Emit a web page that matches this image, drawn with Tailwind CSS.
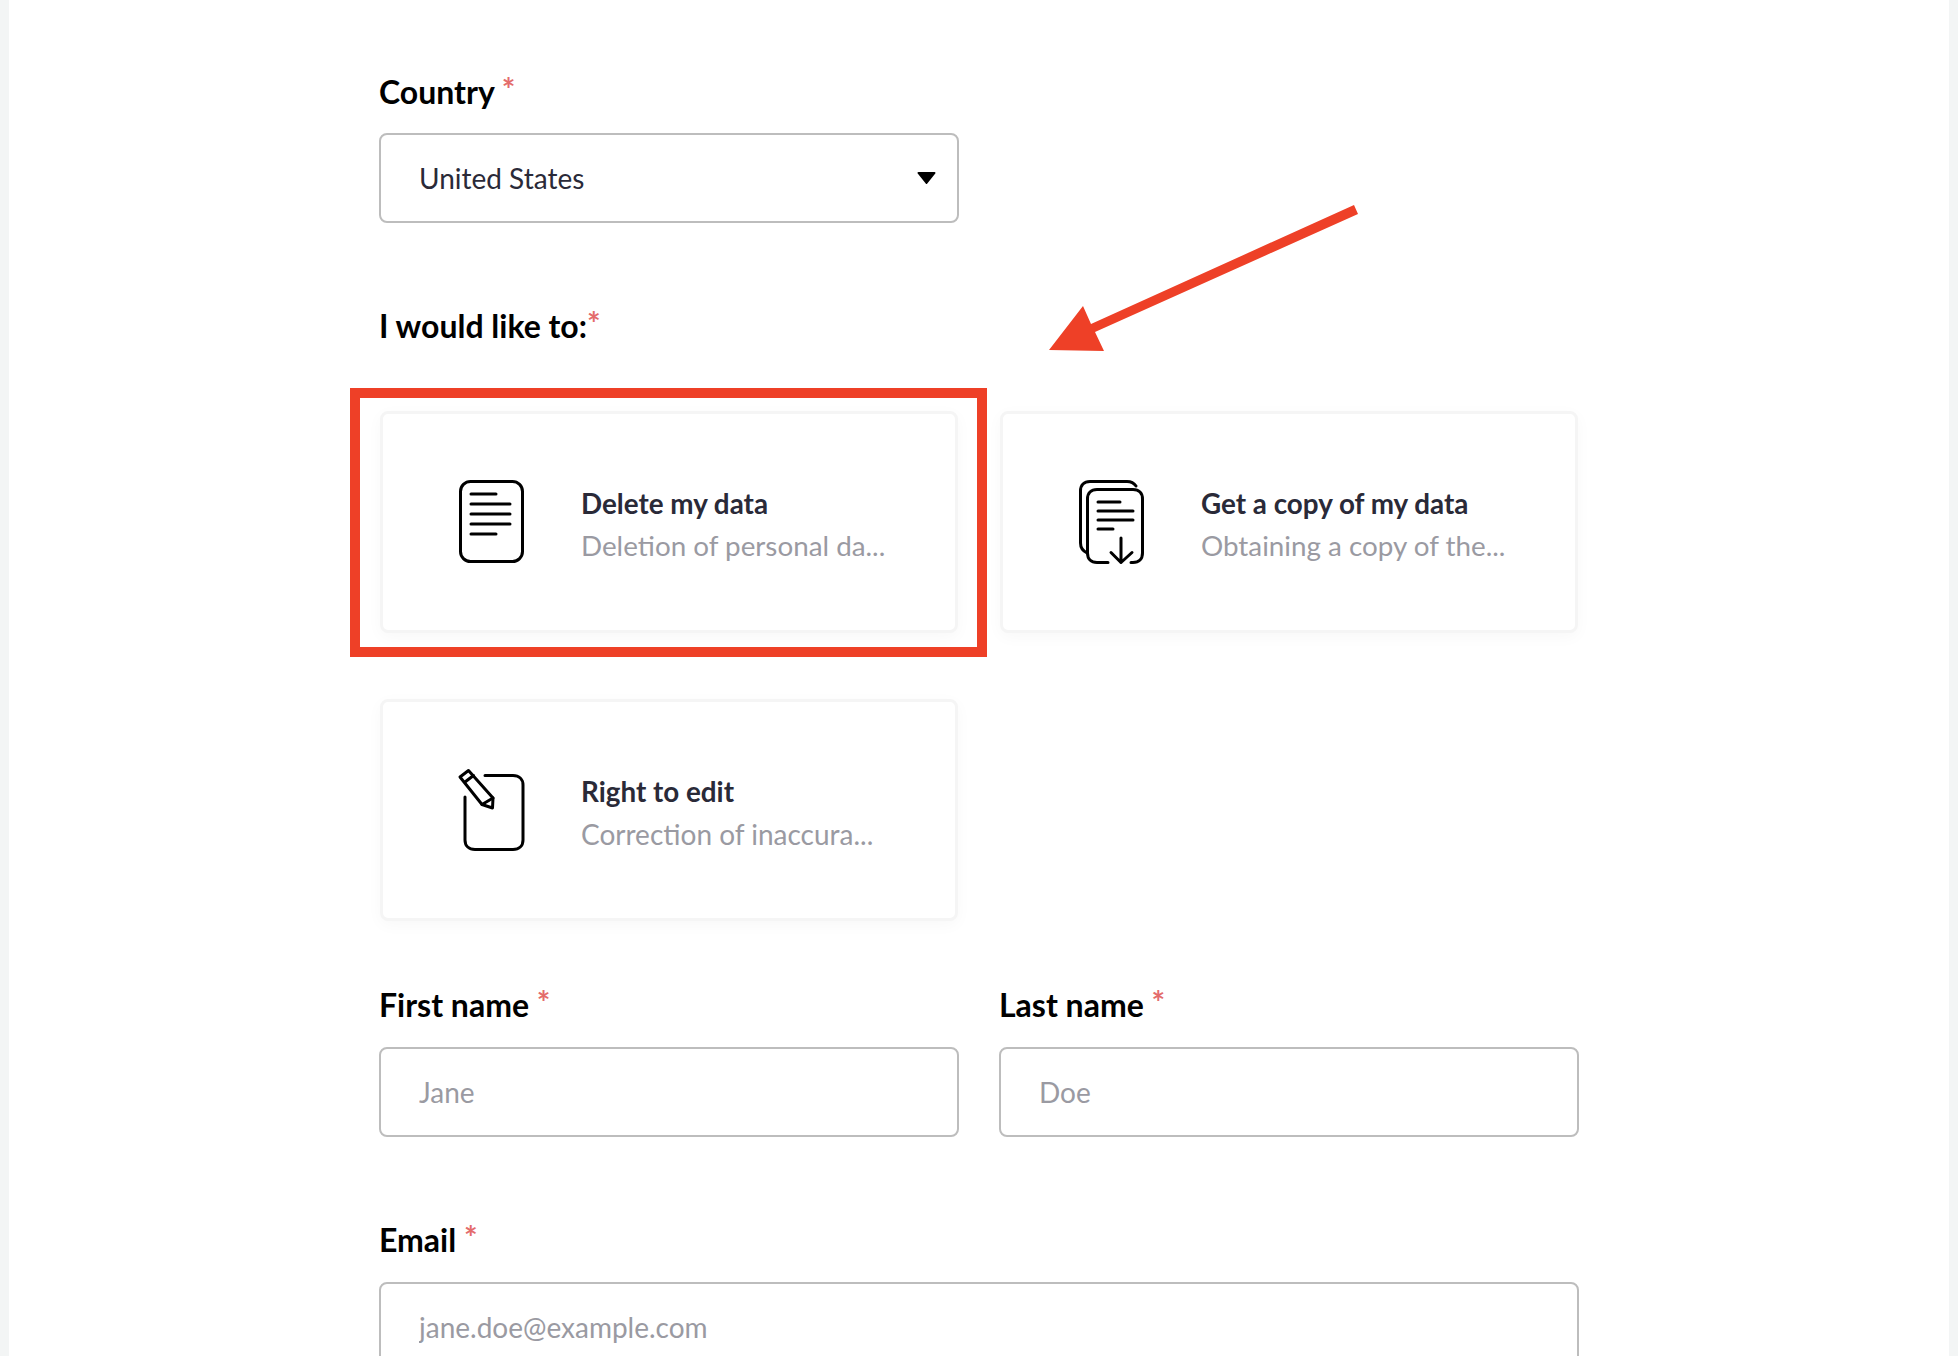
<!DOCTYPE html>
<html lang="en">
<head>
    <meta charset="UTF-8">
    <title>Data request form</title>
    <script src="https://cdn.jsdelivr.net/npm/@tailwindcss/browser@4"></script>
</head>
<body class="bg-white h-screen overflow-hidden font-['Lato',sans-serif]">
    <div class="relative h-full border-l-[9px] border-r-[9px] border-[#f3f5f5] bg-white pt-[71px] pl-[370px]">
        <!-- Annotations -->
        <div class="absolute left-[341px] top-[388px] w-[637px] h-[269px] border-[10px] border-[#ee4027]"></div>
        <svg class="absolute left-[1020px] top-[195px]" width="340" height="165" viewBox="0 0 340 165" fill="none">
            <path d="M325 10 L329 19 L66 137 L75 156 L20 155 L54 111 L62 129 Z" fill="#ee4027"/>
        </svg>

        <form class="w-[1200px]">
            <!-- Country -->
            <label class="block h-10 leading-[41px] mb-[22px] text-[32px] font-bold text-black">Country <span class="text-[#e46c6c] font-bold align-[2px] text-[32px] leading-none">*</span></label>
            <div class="relative w-[580px] mb-[85px]">
                <select class="block w-full h-[90px] appearance-none bg-white border-2 border-[#bdbdbd] rounded-lg pl-[38px] text-[28px] text-[#2a2a38]">
                    <option>United States</option>
                </select>
                <svg class="absolute right-[23px] top-[39px]" width="19" height="12" viewBox="0 0 19 12"><path d="M1.5 1 H17.500 L9.500 11 Z" fill="#000" stroke="#000" stroke-width="2" stroke-linejoin="round"/></svg>
            </div>

            <!-- Request type -->
            <label class="block h-10 leading-[36px] mb-[63px] text-[32px] font-bold text-black">I would like to:<span class="text-[#e46c6c] font-bold align-[2px] text-[32px] leading-none">*</span></label>
            <div class="grid grid-cols-[578px_578px] gap-x-[42px] gap-y-[66px] ml-px mb-[66px]">
                <div class="flex items-center h-[222px] bg-white border-[3px] border-[#f5f5f5] rounded-lg shadow-[0_4px_16px_rgba(0,0,0,0.03)] pl-[72px]">
                    <svg class="shrink-0 mr-[56px]" width="70" height="90" viewBox="0 0 70 90" fill="none" stroke="#000" stroke-width="3" stroke-linecap="round">
                        <rect x="5.500" y="4.500" width="62" height="80" rx="10"/>
                        <path d="M16 17H41M16 27H55M16 37H55M16 47H55M16 57H41"/>
                    </svg>
                    <div class="pt-[5px]">
                        <div class="text-[27.800px] leading-[42px] font-bold text-[#2a2a38]">Delete my data</div>
                        <div class="text-[27.800px] leading-[42px] text-[#9a9aa2]">Deletion of personal da...</div>
                    </div>
                </div>
                <div class="flex items-center h-[222px] bg-white border-[3px] border-[#f5f5f5] rounded-lg shadow-[0_4px_16px_rgba(0,0,0,0.03)] pl-[72px]">
                    <svg class="shrink-0 mr-[56px]" width="70" height="90" viewBox="0 0 70 90" fill="none" stroke="#000" stroke-width="3" stroke-linecap="round" stroke-linejoin="round">
                        <path d="M61 9 C59 6 56 4.500 52 4.500 H15 C9 4.500 5.500 8 5.500 14 V66 C5.500 71 8 74 12 76"/>
                        <path d="M33 85.500 H22 C16 85.500 12.500 82 12.500 76 V22 C12.500 16 16 12.500 22 12.500 H58 C64 12.500 67.500 16 67.500 22 V76 C67.500 82 64 85.500 58 85.500 H56"/>
                        <path d="M23 25H45M23 34H58M23 43H58M23 52H38"/>
                        <path d="M46 61V85.500M36 75.500L46 85.500L57 75.500"/>
                    </svg>
                    <div class="pt-[5px]">
                        <div class="text-[27.800px] leading-[42px] font-bold text-[#2a2a38]">Get a copy of my data</div>
                        <div class="text-[27.800px] leading-[42px] text-[#9a9aa2]">Obtaining a copy of the...</div>
                    </div>
                </div>
                <div class="flex items-center h-[222px] bg-white border-[3px] border-[#f5f5f5] rounded-lg shadow-[0_4px_16px_rgba(0,0,0,0.03)] pl-[72px]">
                    <svg class="shrink-0 mr-[56px]" width="70" height="90" viewBox="0 -4 70 90" fill="none" stroke="#000" stroke-width="3" stroke-linecap="round" stroke-linejoin="round">
                        <path d="M30 6.500 H58 C64 6.500 68 10 68 16 V71 C68 77 64 80.500 58 80.500 H20 C14 80.500 10 77 10 71 V28"/>
                        <path d="M5 8 L13.500 1.500 L38 29 L37.500 39 L27 35.500 Z"/>
                        <path d="M27 35.500 L38 29 M10 13 L18.500 6.500"/>
                    </svg>
                    <div class="pt-[5px]">
                        <div class="text-[27.800px] leading-[42px] font-bold text-[#2a2a38]">Right to edit</div>
                        <div class="text-[28px] leading-[42px] text-[#9a9aa2]">Correction of inaccura...</div>
                    </div>
                </div>
            </div>

            <!-- Name -->
            <div class="grid grid-cols-[580px_580px] gap-x-[40px] mb-[85px]">
                <div>
                    <label class="block h-10 leading-[36px] mb-[20px] text-[32px] font-bold text-black">First name <span class="text-[#e46c6c] font-bold align-[2px] text-[32px] leading-none">*</span></label>
                    <input type="text" placeholder="Jane" class="block w-full h-[90px] bg-white border-2 border-[#bdbdbd] rounded-lg pl-[38px] text-[28px] placeholder:text-[#9a9aa2]">
                </div>
                <div>
                    <label class="block h-10 leading-[36px] mb-[20px] text-[32px] font-bold text-black">Last name <span class="text-[#e46c6c] font-bold align-[2px] text-[32px] leading-none">*</span></label>
                    <input type="text" placeholder="Doe" class="block w-full h-[90px] bg-white border-2 border-[#bdbdbd] rounded-lg pl-[38px] text-[28px] placeholder:text-[#9a9aa2]">
                </div>
            </div>

            <!-- Email -->
            <label class="block h-10 leading-[36px] mb-[20px] text-[32px] font-bold text-black">Email <span class="text-[#e46c6c] font-bold align-[2px] text-[32px] leading-none">*</span></label>
            <input type="email" placeholder="jane.doe@example.com" class="block w-full h-[90px] bg-white border-2 border-[#bdbdbd] rounded-lg pl-[38px] text-[28px] placeholder:text-[#9a9aa2]">
        </form>
    </div>
</body>
</html>
